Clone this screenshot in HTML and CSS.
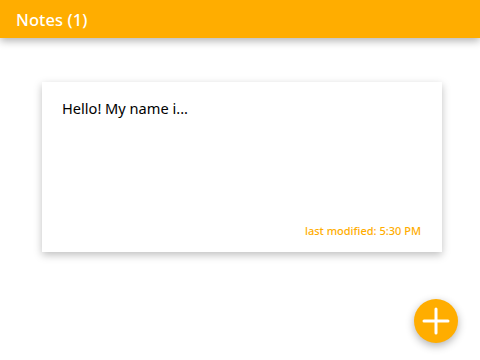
FILE: index.html
```html
<!DOCTYPE html>
<html>
<head>
<meta charset="utf-8">
<link rel="stylesheet" href="styles.css">
</head>
<body>
<header class="bar"><h1 class="title">Notes (1)</h1></header>
<main class="list">
  <article class="card">
    <p class="card-text">Hello! My name i...</p>
    <p class="card-meta">last modified: 5:30 PM</p>
  </article>
</main>
<button class="fab" aria-label="Add note">
  <svg width="30" height="30" viewBox="0 0 30 30"><path d="M15 3v24M3 15h24" stroke="#fff" stroke-width="3" stroke-linecap="round"/></svg>
</button>
</body>
</html>
```
FILE: styles.css
```css
html, body { margin: 0; padding: 0; }
body {
  width: 480px; height: 360px; overflow: hidden; background: #fff;
  font-family: "Noto Sans", "DejaVu Sans", sans-serif;
  position: relative;
}
.bar {
  height: 38px; background: #FFAD00;
  display: flex; align-items: center; padding: 0 16px;
  box-shadow: 0 3px 8px rgba(0,0,0,0.3);
}
.title { margin: 0; color: #fff; font-size: 16.5px; font-weight: 500; letter-spacing: 0.1px; }
.list { padding: 44px 38px 0 42px; }
.card {
  width: 400px; height: 170px; box-sizing: border-box;
  padding: 16px 21px 14px 20px;
  display: flex; flex-direction: column; justify-content: space-between;
  box-shadow: 0 3px 8px rgba(0,0,0,0.25);
}
.card-text { margin: 0; font-size: 14.6px; color: #000; }
.card-meta { margin: 0; text-align: right; font-size: 11px; color: #FFAD00; font-weight: 500; }
.fab {
  position: absolute; left: 414px; top: 299px;
  width: 44px; height: 44px; border-radius: 50%; border: 0; padding: 0;
  background: #FFAD00; display: flex; align-items: center; justify-content: center;
  box-shadow: 0 3px 8px rgba(0,0,0,0.3);
}
```
